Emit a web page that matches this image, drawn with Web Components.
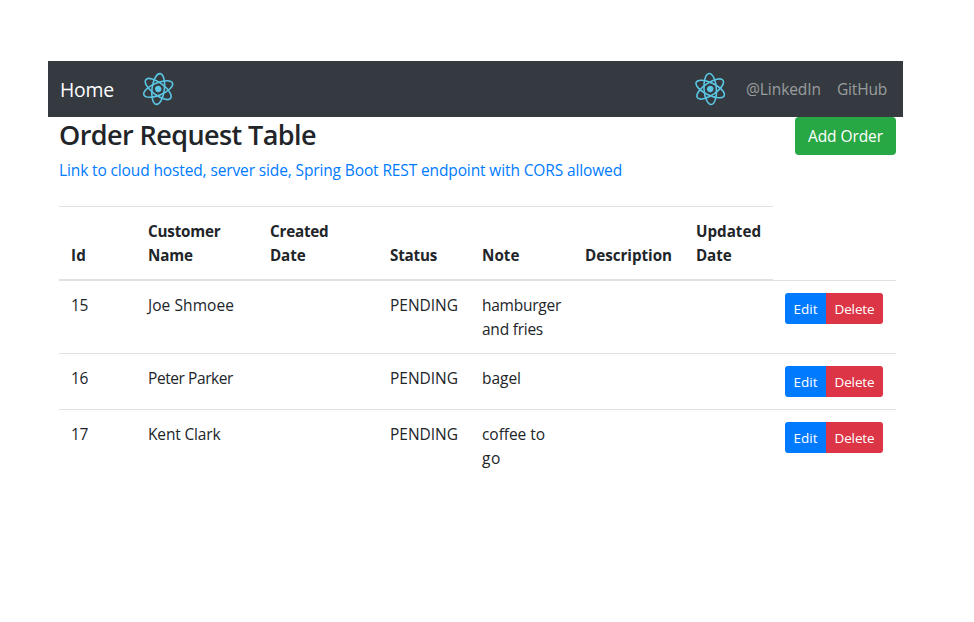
<!DOCTYPE html>
<html lang="en">
<head>
<meta charset="utf-8">
<title>Order Request Table</title>
<style>
body{margin:0;background:#fff;color:#212529;font:400 15.5px/24px "Open Sans","Noto Sans",sans-serif}
</style>
</head>
<body>
<order-app></order-app>
<script>
// Inline label whose tracking is adjusted so that it takes the given width.
class FitLabel extends HTMLElement{
  connectedCallback(){
    if(this.shadowRoot)return;
    const root=this.attachShadow({mode:'open'});
    root.innerHTML='<style>:host{display:inline-block;white-space:nowrap}span{display:inline-block}</style><span></span>';
    const s=root.querySelector('span');
    s.textContent=this.getAttribute('text');
    const w=+this.getAttribute('width');
    if(w){
      const n=s.textContent.length;
      const natural=s.getBoundingClientRect().width;
      s.style.letterSpacing=((w-natural)/n).toFixed(3)+'px';
    }
  }
}
customElements.define('fit-label',FitLabel);

class AtomLogo extends HTMLElement{
  connectedCallback(){
    const a=+this.getAttribute('angle')||0;
    this.attachShadow({mode:'open'}).innerHTML=`<style>:host{display:block;width:36px;height:36px}svg{display:block}</style>
    <svg width="36" height="36" viewBox="-18.2 -18 36 36" fill="none" stroke="#61dafb" stroke-width="1.6" opacity=".88"><g transform="rotate(${a})">
    <ellipse rx="15.5" ry="6.2"/><ellipse rx="15.5" ry="6.2" transform="rotate(60)"/><ellipse rx="15.5" ry="6.2" transform="rotate(120)"/>
    <circle r="3.2" fill="#61dafb" stroke="none"/></g></svg>`;
  }
}
customElements.define('atom-logo',AtomLogo);

class NavBar extends HTMLElement{
  connectedCallback(){
    this.attachShadow({mode:'open'}).innerHTML=`<style>
    :host{display:flex;align-items:center;height:56px;box-sizing:border-box;background:#343a40;padding:0 16px 0 12px;color:#fff}
    .brand{font-size:19.4px;line-height:30px;margin:1px 26px 0 0}
    .right{margin-left:auto;display:flex;align-items:center;color:rgba(255,255,255,.5)}
    .gap{margin:0 16px 0 18px}
    .right fit-label{margin-top:-1px}
    </style>
    <fit-label class="brand" text="Home" width="54"></fit-label><atom-logo angle="-23"></atom-logo>
    <div class="right"><atom-logo angle="26"></atom-logo><fit-label class="gap" text="@LinkedIn" width="75"></fit-label><fit-label text="GitHub" width="50"></fit-label></div>`;
  }
}
customElements.define('nav-bar',NavBar);

class ActionButton extends HTMLElement{
  connectedCallback(){
    this.attachShadow({mode:'open'}).innerHTML=`<style>
    :host{display:flex;align-items:center;justify-content:center;box-sizing:border-box;color:#fff;cursor:pointer;border-radius:4px}
    :host([kind=add]){background:#28a745;width:101px;height:38px}
    :host([kind=edit]){background:#007bff;width:41px;height:31px;font-size:13.5px;font-weight:500;border-radius:3px 0 0 3px}
    :host([kind=delete]){background:#dc3545;width:57px;height:31px;font-size:13.5px;font-weight:500;border-radius:0 3px 3px 0}
    </style><slot></slot>`;
  }
}
customElements.define('action-button',ActionButton);

class OrderRow extends HTMLElement{
  connectedCallback(){
    this.attachShadow({mode:'open'}).innerHTML=`<style>
    :host{display:grid;grid-template-columns:77px 122px 120px 92px 103px 111px 89px 123px;border-top:1px solid #dee2e6}
    ::slotted(*){padding:12px}
    </style><slot></slot>`;
  }
}
customElements.define('order-row',OrderRow);

class OrderTable extends HTMLElement{
  connectedCallback(){
    const f=([t,w])=>`<fit-label text="${t}" width="${w}"></fit-label>`;
    const cell=c=>`<div>${(c||[]).map(f).join('<br>')}</div>`;
    const head=[[['Id',15]],[['Customer',72.5],['Name',45]],[['Created',58.5],['Date',35.5]],[['Status',47]],[['Note',37.5]],[['Description',87]],[['Updated',65],['Date',35.5]]];
    const P=[['PENDING',68]];
    const rows=[
      [[['15',17]],[['Joe Shmoee',86]],null,P,[['hamburger',79],['and fries',61]],null,null],
      [[['16',17]],[['Peter Parker',85]],null,P,[['bagel',39]],null,null],
      [[['17',17]],[['Kent Clark',72.5]],null,P,[['coffee to',63],['go',19]],null,null]];
    this.attachShadow({mode:'open'}).innerHTML=`<style>
    :host{display:block}
    .head{display:grid;grid-template-columns:77px 122px 120px 92px 103px 111px 89px;width:714px;height:74px;box-sizing:border-box;align-items:end;border:solid #dee2e6;border-width:1px 0;font-weight:700;font-size:15.2px}
    .head div{padding:12px}
    order-row{height:73px;box-sizing:border-box}
    order-row.short{height:56px}
    .acts{display:flex}
    </style><div class="head">${head.map(cell).join('')}</div>`+
    rows.map(r=>`<order-row class="${r[4].length===1?'short':''}">${r.map(cell).join('')}<div class="acts"><action-button kind="edit">${f(['Edit',24])}</action-button><action-button kind="delete">${f(['Delete',40])}</action-button></div></order-row>`).join('');
  }
}
customElements.define('order-table',OrderTable);

class OrderApp extends HTMLElement{
  connectedCallback(){
    this.attachShadow({mode:'open'}).innerHTML=`<style>
    :host{display:block;width:855px;padding:61px 0 0 48px}
    main{padding:0 7px 0 11px}
    .top{display:flex;justify-content:space-between;align-items:flex-start;height:89px}
    h3{margin:1px 0 6px;font-size:27px;line-height:34px;font-weight:600}
    a{color:#007bff;text-decoration:none;display:block}
    </style>
    <nav-bar></nav-bar>
    <main><div class="top"><div><h3><fit-label text="Order Request Table" width="257"></fit-label></h3>
    <a href="#"><fit-label text="Link to cloud hosted, server side, Spring Boot REST endpoint with CORS allowed" width="563"></fit-label></a></div>
    <action-button kind="add"><fit-label text="Add Order" width="75"></fit-label></action-button></div>
    <order-table></order-table></main>`;
  }
}
customElements.define('order-app',OrderApp);
</script>
</body>
</html>
